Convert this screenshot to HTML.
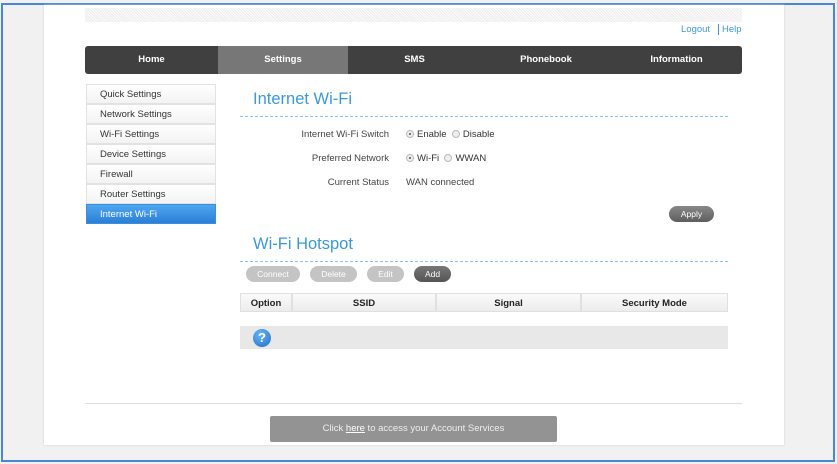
<!DOCTYPE html>
<html><head><style>
*{margin:0;padding:0;box-sizing:border-box}
body{width:837px;height:464px;background:#f1f1f1;position:relative;font-family:"Liberation Sans",sans-serif;overflow:hidden;font-size:9.5px;color:#333}
.a{position:absolute}
.frame{left:1px;top:3px;width:834px;height:459px;border:2px solid #4a86d8}
.panel{left:44px;top:5px;width:740px;height:440px;background:#fff;box-shadow:0 0 2px #ccc}
.dots{left:85px;top:8px;width:657px;height:14px;background-image:repeating-linear-gradient(45deg,#ececec 0 1px,#fcfcfc 1px 2px)}
.nav{left:85px;top:46px;width:657px;height:28px;background:#404040;border-radius:3px;color:#fff;font-weight:bold;font-size:9.5px}
.nav div{position:absolute;top:0;height:28px;line-height:28px;text-align:center}
.side div{position:absolute;left:86px;width:130px;height:20px;line-height:20px;padding-left:13px;border:1px solid #e2e2e2;background:linear-gradient(#fff,#f3f3f3);font-size:9.5px;color:#333}
.h{color:#3a9ad9;font-size:16.5px}
.dl{border-top:1px dashed #8cc4ea;height:0}
.lbl{width:150px;text-align:right;font-size:9.5px;color:#444}
.rad{display:inline-block;width:8px;height:8px;border-radius:50%;border:1px solid #bbb;background:#eee;vertical-align:-1px;margin-right:3px;position:relative}
.rad.on:after{content:"";position:absolute;left:2px;top:2px;width:2px;height:2px;border-radius:50%;background:#555}
.btn{height:16px;border-radius:8px;text-align:center;line-height:16px;color:#fff;font-size:8.5px}
.th{top:293px;height:19px;line-height:19px;text-align:center;font-weight:bold;font-size:9.5px;background:linear-gradient(#fafafa,#ececec);border:1px solid #e0e0e0;color:#222}
</style></head><body>
<div class="a frame"></div>
<div class="a panel"></div>
<div class="a dots"></div>
<div class="a" style="left:681px;top:24px;color:#3a9ad9;font-size:9.5px">Logout&nbsp;&nbsp;&nbsp;<span style="border-left:1px solid #3a9ad9;padding-left:3px">Help</span></div>
<div class="a nav">
<div style="left:0;width:133px">Home</div>
<div style="left:133px;width:130px;background:#777">Settings</div>
<div style="left:263px;width:133px">SMS</div>
<div style="left:396px;width:130px">Phonebook</div>
<div style="left:526px;width:131px">Information</div>
</div>
<div class="side">
<div style="top:84px">Quick Settings</div>
<div style="top:104px">Network Settings</div>
<div style="top:124px">Wi-Fi Settings</div>
<div style="top:144px">Device Settings</div>
<div style="top:164px">Firewall</div>
<div style="top:184px">Router Settings</div>
<div style="top:204px;background:linear-gradient(#4ea6f0,#2a7fd6);color:#fff;border-color:#3a8ee0">Internet Wi-Fi</div>
</div>
<div class="a h" style="left:253px;top:90px">Internet Wi-Fi</div>
<div class="a dl" style="left:240px;top:116px;width:488px"></div>
<div class="a lbl" style="left:239px;top:129px">Internet Wi-Fi Switch</div>
<div class="a" style="left:406px;top:129px"><span class="rad on"></span>Enable&nbsp;&nbsp;<span class="rad"></span>Disable</div>
<div class="a lbl" style="left:239px;top:153px">Preferred Network</div>
<div class="a" style="left:406px;top:153px"><span class="rad on"></span>Wi-Fi&nbsp;&nbsp;<span class="rad"></span>WWAN</div>
<div class="a lbl" style="left:239px;top:177px">Current Status</div>
<div class="a" style="left:406px;top:177px;color:#444">WAN connected</div>
<div class="a btn" style="left:669px;top:206px;width:45px;background:linear-gradient(#888,#5e5e5e)">Apply</div>
<div class="a h" style="left:253px;top:235px">Wi-Fi Hotspot</div>
<div class="a dl" style="left:240px;top:261px;width:488px"></div>
<div class="a btn" style="left:246px;top:266px;width:54px;background:#c4c4c4">Connect</div>
<div class="a btn" style="left:310px;top:266px;width:47px;background:#c4c4c4">Delete</div>
<div class="a btn" style="left:367px;top:266px;width:37px;background:#c4c4c4">Edit</div>
<div class="a btn" style="left:414px;top:266px;width:37px;background:linear-gradient(#777,#555)">Add</div>
<div class="a th" style="left:240px;width:52px">Option</div>
<div class="a th" style="left:292px;width:144px">SSID</div>
<div class="a th" style="left:436px;width:145px">Signal</div>
<div class="a th" style="left:581px;width:147px">Security Mode</div>
<div class="a" style="left:240px;top:326px;width:488px;height:23px;background:#e8e8e8"></div>
<div class="a" style="left:253px;top:329px;width:18px;height:18px;border-radius:50%;background:radial-gradient(circle at 40% 30%,#6ab4f5,#1f6fc9);color:#fff;font-weight:bold;font-size:13px;text-align:center;line-height:18px">?</div>
<div class="a" style="left:85px;top:403px;width:657px;border-top:1px solid #ddd"></div>
<div class="a" style="left:270px;top:416px;width:287px;height:26px;background:#939393;border-radius:2px;color:#eee;text-align:center;line-height:26px;font-size:9.5px">Click <u style="color:#fff">here</u> to access your Account Services</div>
</body></html>
